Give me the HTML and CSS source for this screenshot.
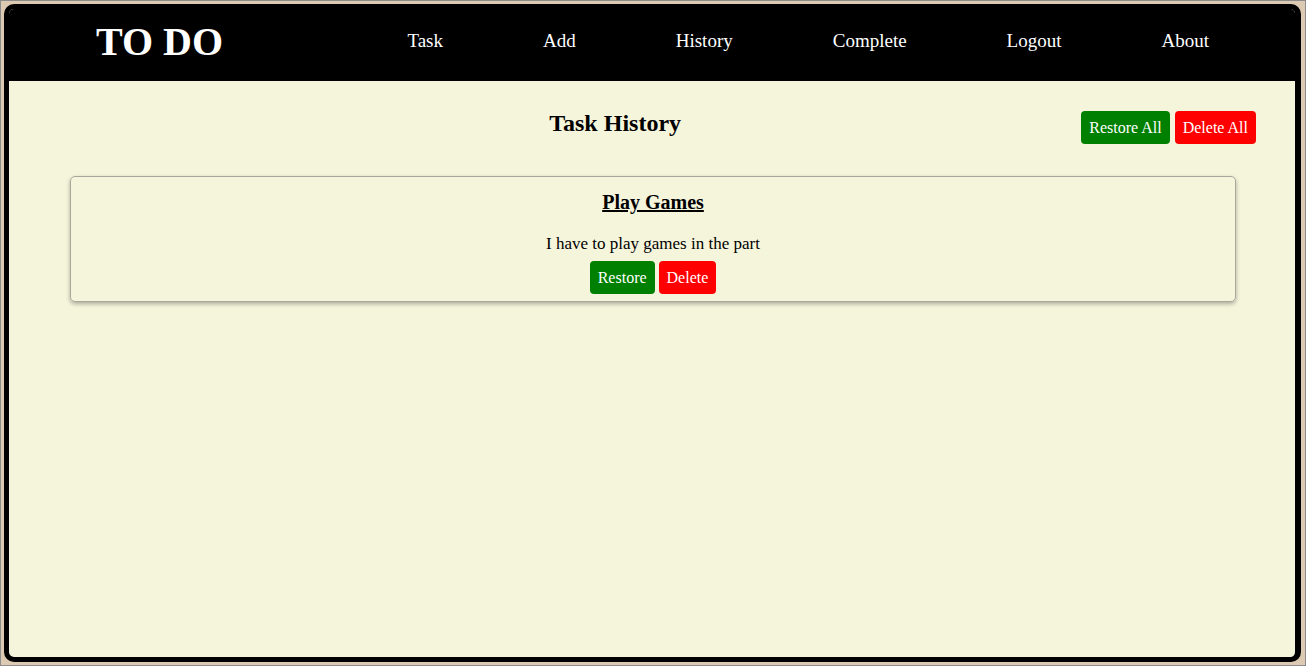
FILE: index.html
```html
<!DOCTYPE html>
<html lang="en">
<head>
<meta charset="utf-8">
<title>TO DO - Task History</title>
<link rel="stylesheet" href="styles.css">
</head>
<body>
<div class="app">
  <header class="topbar">
    <div class="logo">TO DO</div>
    <nav class="nav">
      <a href="#">Task</a>
      <a href="#">Add</a>
      <a href="#">History</a>
      <a href="#">Complete</a>
      <a href="#">Logout</a>
      <a href="#">About</a>
    </nav>
  </header>
  <main class="content">
    <div class="title-row">
      <h2 class="page-title">Task History</h2>
      <div class="bulk-actions">
        <button class="btn btn-green">Restore All</button>
        <button class="btn btn-red">Delete All</button>
      </div>
    </div>
    <div class="card">
      <h3 class="card-title">Play Games</h3>
      <p class="card-desc">I have to play games in the part</p>
      <div class="card-actions">
        <button class="btn btn-green">Restore</button>
        <button class="btn btn-red">Delete</button>
      </div>
    </div>
  </main>
</div>
</body>
</html>
```

FILE: styles.css
```css
html, body {
  margin: 0;
  padding: 0;
}

body {
  box-sizing: border-box;
  height: 666px;
  border: 1px solid #8c8c8c;
  padding: 3px 4px 3px 3px;
  background: #dccab2;
  font-family: "Liberation Serif", "Times New Roman", serif;
  overflow: hidden;
}

.app {
  box-sizing: border-box;
  height: 100%;
  border: 5px solid #000;
  border-right-width: 6px;
  border-radius: 10px;
  background: #f5f5dc;
  overflow: hidden;
  display: flex;
  flex-direction: column;
}

.topbar {
  box-sizing: border-box;
  height: 72px;
  background: #000;
  display: flex;
  align-items: center;
  justify-content: space-between;
  padding: 0 86px 8px 87px;
}

.logo {
  color: #fff;
  font-size: 40px;
  font-weight: bold;
}

.nav {
  display: flex;
  gap: 100px;
}

.nav a {
  color: #fff;
  text-decoration: none;
  font-size: 19px;
}

.content {
  flex: 1;
}

.title-row {
  display: flex;
  align-items: flex-start;
  margin-top: 29px;
  padding: 0 39px 0 140px;
}

.page-title {
  flex: 1;
  margin: 0;
  text-align: center;
  font-size: 24px;
  font-weight: bold;
}

.bulk-actions {
  display: flex;
  gap: 5px;
  margin-top: 1px;
}

.btn {
  font-family: "Liberation Serif", "Times New Roman", serif;
  font-size: 16px;
  line-height: 19px;
  padding: 7px 8px;
  border: none;
  border-radius: 4px;
  color: #fff;
  cursor: pointer;
}

.btn-green {
  background: #008000;
}

.btn-red {
  background: #ff0000;
}

.card {
  margin: 32px 59px 0 61px;
  border: 1px solid #a8a79c;
  border-radius: 5px;
  box-shadow: 0 2px 4px rgba(0, 0, 0, 0.3);
  padding: 14px 10px 7px 10px;
  text-align: center;
}

.card-title {
  margin: 0;
  font-size: 20px;
  font-weight: bold;
  text-decoration: underline;
}

.card-desc {
  margin: 20px 0 0 0;
  font-size: 17px;
}

.card-actions {
  display: flex;
  justify-content: center;
  gap: 4px;
  margin-top: 7px;
}
```
